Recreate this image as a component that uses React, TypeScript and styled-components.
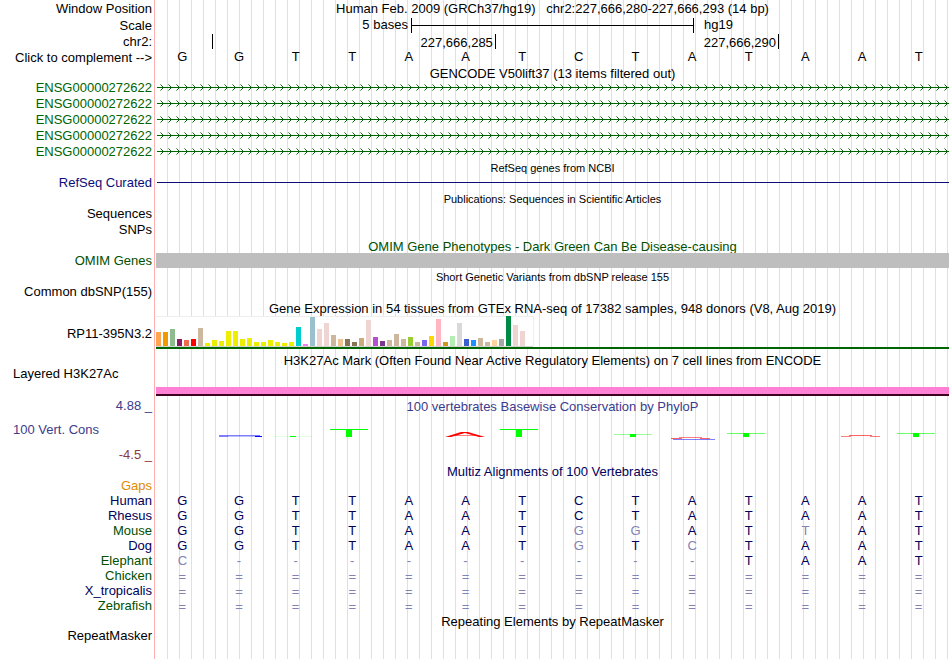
import { ReactNode, useState } from 'react';
import styled, { createGlobalStyle, ThemeProvider } from 'styled-components';

const theme = {
  palette: {
    text: '#000000',
    gencode: '#006400',
    refseq: '#0c0c78',
    align: '#00005a',
    faded: '#8282b4',
    omim: '#005000',
    positive: '#3c3c8c',
    negative: '#8c3c3c',
    gaps: '#e08a00',
    grid: '#dcdcff',
    edge: '#ffb0b0',
    grey: '#bebebe',
  },
  font: { body: 13, small: 11 },
};

type Tone = keyof typeof theme.palette;

const tone = ({ theme: t, $tone = 'text' }: { theme?: any; $tone?: Tone }) => t.palette[$tone];

const GlobalStyle = createGlobalStyle`
  body {
    margin: 0;
    background: #fff;
  }
`;

const Browser = styled.main`
  display: grid;
  grid-template-columns: 154px minmax(0, 1fr);
  min-height: 100vh;
  font-family: 'Liberation Sans', Arial, sans-serif;
  font-size: ${({ theme }) => theme.font.body}px;
  line-height: 14px;
  white-space: pre;
`;

const Labels = styled.div`
  display: flex;
  flex-direction: column;
`;

const Tracks = styled.div`
  display: flex;
  flex-direction: column;
  border-left: 1px solid ${({ theme }) => theme.palette.edge};
  padding: 0 1px;
  background: repeating-linear-gradient(
      to right,
      transparent 0 11px,
      ${({ theme }) => theme.palette.grid} 11px 12px
    )
    content-box;
`;

const Label = styled.div<{ $h: number; $tone?: Tone; $left?: boolean }>`
  display: flex;
  align-items: center;
  justify-content: ${({ $left }) => ($left ? 'flex-start' : 'flex-end')};
  height: ${({ $h }) => $h}px;
  padding: 0 2px 0 13px;
  color: ${tone};
`;

const ComplementButton = styled.button`
  border: 0;
  padding: 0;
  background: none;
  color: inherit;
  font: inherit;
  cursor: pointer;
`;

const Title = styled.div<{ $h: number; $tone?: Tone; $small?: boolean }>`
  height: ${({ $h }) => $h}px;
  line-height: ${({ $h }) => $h + 2}px;
  font-size: ${({ theme, $small }) => ($small ? theme.font.small : theme.font.body)}px;
  text-align: center;
  color: ${tone};
`;

const Lane = styled.div<{ $h: number }>`
  display: flex;
  flex-direction: column;
  height: ${({ $h }) => $h}px;
`;

const ScaleLane = styled.div`
  display: grid;
  grid-template-columns: minmax(0, 9fr) minmax(0, 10fr) minmax(0, 9fr);
  align-items: center;
  height: 18px;
`;

const ScaleText = styled.div<{ $end?: boolean }>`
  padding: 0 3px 0 10px;
  text-align: ${({ $end }) => ($end ? 'right' : 'left')};
`;

const ScaleBar = styled.div`
  display: flex;
  align-items: center;
  height: 15px;
  border: solid #000;
  border-width: 0 1px;

  &::before {
    content: '';
    flex: 1;
    height: 1px;
    background: #000;
  }
`;

const RulerLane = styled.div`
  display: grid;
  grid-template-columns: repeat(14, minmax(0, 1fr));
  height: 16px;
`;

const RulerSpan = styled.div<{ $bases: number }>`
  grid-column: span ${({ $bases }) => $bases};
  height: 15px;
  line-height: 18px;
  padding-right: 2px;
  border-right: 1px solid #000;
  text-align: right;
`;

const Bases = styled.div<{ $h: number; $line: number; $tone?: Tone }>`
  display: grid;
  grid-template-columns: repeat(14, minmax(0, 1fr));
  height: ${({ $h }) => $h}px;
  line-height: ${({ $line }) => $line}px;
  color: ${tone};
`;

const Base = styled.span<{ $faded?: boolean }>`
  padding-right: 4px;
  text-align: center;
  color: ${({ theme, $faded }) => ($faded ? theme.palette.faded : 'inherit')};
`;

const Solid = styled.div<{ $h: number; $tone: Tone }>`
  height: ${({ $h }) => $h}px;
  background: ${tone};
`;

const RefSeqLine = styled.div`
  height: 1px;
  margin: 8px 0 0 1px;
  background: ${({ theme }) => theme.palette.refseq};
`;

const Expression = styled.div`
  border-bottom: 2px solid #006400;
`;

const Histone = styled.div`
  height: 7px;
  margin-top: 20px;
  background: #ff80d5;
  border-bottom: 2px solid #400020;
`;

const Drawing = styled.svg`
  display: block;
  width: 100%;
`;

const TRANSCRIPTS = [1, 2, 3, 4, 5];

const SEQUENCE = 'GGTTAATCTATAAT';

const COMPLEMENT: Record<string, string> = { A: 'T', T: 'A', C: 'G', G: 'C' };

const SPECIES: { name: string; tone: Tone; bases: string }[] = [
  { name: 'Human', tone: 'align', bases: 'GGTTAATCTATAAT' },
  { name: 'Rhesus', tone: 'align', bases: 'GGTTAATCTATAAT' },
  { name: 'Mouse', tone: 'omim', bases: 'GGTTAATGGATTAT' },
  { name: 'Dog', tone: 'align', bases: 'GGTTAATGTCTAAT' },
  { name: 'Elephant', tone: 'omim', bases: 'C---------TAAT' },
  { name: 'Chicken', tone: 'omim', bases: '==============' },
  { name: 'X_tropicalis', tone: 'align', bases: '==============' },
  { name: 'Zebrafish', tone: 'omim', bases: '==============' },
];

// [colour, height] for each GTEx tissue
const TISSUES: [string, number][] = [
  ['#ffa54f', 14], ['#ee9a00', 14], ['#8fbc8f', 17], ['#8b1c62', 7], ['#ee6a50', 6], ['#ff0000', 7],
  ['#cdb79e', 18], ['#eeee00', 3], ['#eeee00', 6], ['#eeee00', 5], ['#eeee00', 15], ['#eeee00', 15],
  ['#eeee00', 7], ['#eeee00', 8], ['#eeee00', 4], ['#eeee00', 4], ['#eeee00', 6], ['#eeee00', 4],
  ['#eeee00', 3], ['#eeee00', 4], ['#00cdcd', 19], ['#ee82ee', 2], ['#9ac0cd', 29], ['#eed5d2', 17],
  ['#eed5d2', 23], ['#cdb79e', 11], ['#eec591', 7], ['#8b7355', 7], ['#8b7355', 4], ['#cdaa7d', 8],
  ['#eed5d2', 26], ['#b452cd', 9], ['#7a378b', 5], ['#cdb79e', 6], ['#cdb79e', 12], ['#cdb79e', 7],
  ['#9acd32', 9], ['#cdb79e', 4], ['#7a67ee', 6], ['#ffd700', 10], ['#ffb6c1', 27], ['#cd9b1d', 4],
  ['#b4eeb4', 10], ['#d9d9d9', 23], ['#3a5fcd', 7], ['#1e90ff', 6], ['#cdb79e', 8], ['#cdb79e', 4],
  ['#ffd39b', 6], ['#a6a6a6', 7], ['#008b45', 30], ['#eed5d2', 21], ['#eed5d2', 15],
];

// squashed T glyphs of the conservation logo: left, top, height, bar opacity
const LOGO_T = [
  [118, 23, 1, 0.12],
  [174, 16, 8, 1],
  [344, 16, 8, 1],
  [458, 21, 3, 0.4],
  [571, 20, 4, 0.6],
  [741, 20, 4, 0.6],
];

const Transcript = ({ id }: { id: number }) => (
  <Drawing height="16" aria-hidden="true">
    <defs>
      <pattern id={`strand-${id}`} width="8" height="16" patternUnits="userSpaceOnUse">
        <path d="M6 6h1v1h-1zM6 8h1v1h-1zM5 5h1v1h-1zM5 9h1v1h-1z" fill="#006400" />
        <path d="M4 4h1v1h-1zM4 10h1v1h-1z" fill="#006400" opacity="0.5" />
      </pattern>
    </defs>
    <rect x="1" y="7" width="100%" height="1" fill="#006400" />
    <rect width="100%" height="16" fill={`url(#strand-${id})`} />
  </Drawing>
);

const ExpressionBars = () => (
  <Drawing height="31" aria-hidden="true" shapeRendering="crispEdges">
    <rect width="377" height="31" fill="#fff" />
    <path d="M0 0h378v30h-1V1H0z" fill="#eeeeee" />
    <rect y="30" width="377" height="1" fill="#d3d3d3" />
    {TISSUES.map(([fill, h], i) => (
      <rect key={i} x={i * 7} y={30 - h} width="5" height={h} fill={fill} />
    ))}
  </Drawing>
);

const Conservation = () => (
  <Drawing height="50" viewBox="0 0 793 50" preserveAspectRatio="none" aria-hidden="true">
    <path d="M63 23.5H72M63 22.5H104" stroke="#0000ff" opacity="0.5" />
    <path d="M72 23.5H100" stroke="#0000ff" opacity="0.25" />
    <path d="M99 23.5H106" stroke="#0000ff" />
    <path d="M289 24L305 19H312L329 24H323L309 20L295 24Z" fill="#ff0000" />
    <path d="M298 22.5H320" stroke="#ff0000" opacity="0.5" />
    <path d="M515 25.5H526M544 25.5H554" stroke="#ff0000" opacity="0.6" />
    <path d="M523 24.5H546" stroke="#ff0000" opacity="0.5" />
    <path d="M517 26.5H559" stroke="#0000ff" opacity="0.5" />
    <path d="M685 23.5H695M714 23.5H724" stroke="#ff0000" opacity="0.5" />
    <path d="M693 22.5H716" stroke="#ff0000" opacity="0.6" />
    {LOGO_T.map(([x, y, h, opacity]) => (
      <g key={x} fill="#00ff00">
        <rect x={x} y={y} width="38" height="1" opacity={opacity} />
        <rect x={x + 16} y={y} width="6" height={h} />
      </g>
    ))}
  </Drawing>
);

type BaseRowProps = { bases: string; h: number; line: number; tone?: Tone; reference?: string };

const BaseRow = ({ bases, h, line, tone: t, reference }: BaseRowProps) => (
  <Bases $h={h} $line={line} $tone={t}>
    {bases.split('').map((base, i) => (
      <Base key={i} $faded={reference !== undefined && base !== reference[i]}>
        {base}
      </Base>
    ))}
  </Bases>
);

const Page = ({ children }: { children: ReactNode }) => (
  <ThemeProvider theme={theme}>
    <GlobalStyle />
    <Browser>{children}</Browser>
  </ThemeProvider>
);

export default function App() {
  const [complement, setComplement] = useState(false);
  const bases = complement ? SEQUENCE.replace(/./g, (b) => COMPLEMENT[b]) : SEQUENCE;

  return (
    <Page>
      <Labels>
        <Label $h={18}>Window Position</Label>
        <Label $h={16}>Scale</Label>
        <Label $h={16}>chr2:</Label>
        <Label $h={16}>
          <ComplementButton type="button" onClick={() => setComplement(!complement)}>
            {'Click to complement -->'}
          </ComplementButton>
        </Label>
        <Label $h={14} />
        {TRANSCRIPTS.map((id) => (
          <Label key={id} $h={16} $tone="gencode">ENSG00000272622</Label>
        ))}
        <Label $h={14} />
        <Label $h={18} $tone="refseq">RefSeq Curated</Label>
        <Label $h={14} />
        <Label $h={16}>Sequences</Label>
        <Label $h={16}>SNPs</Label>
        <Label $h={15} />
        <Label $h={16} $tone="omim">OMIM Genes</Label>
        <Label $h={15} />
        <Label $h={16}>Common dbSNP(155)</Label>
        <Label $h={16} />
        <Label $h={36}>RP11-395N3.2</Label>
        <Label $h={15} />
        <Label $h={14} $left>Layered H3K27Ac</Label>
        <Label $h={18} />
        <Label $h={14} $tone="positive">4.88 _</Label>
        <Label $h={34} $tone="positive" $left>100 Vert. Cons</Label>
        <Label $h={16} $tone="negative">-4.5 _</Label>
        <Label $h={16} />
        <Label $h={14} $tone="gaps">Gaps</Label>
        {SPECIES.map(({ name, tone: t }) => (
          <Label key={name} $h={15} $tone={t}>{name}</Label>
        ))}
        <Label $h={16} />
        <Label $h={14}>RepeatMasker</Label>
      </Labels>

      <Tracks>
        <Title $h={16}>Human Feb. 2009 (GRCh37/hg19)   chr2:227,666,280-227,666,293 (14 bp)</Title>
        <ScaleLane>
          <ScaleText $end>5 bases</ScaleText>
          <ScaleBar />
          <ScaleText>hg19</ScaleText>
        </ScaleLane>
        <RulerLane>
          <RulerSpan $bases={1} />
          <RulerSpan $bases={5}>227,666,285</RulerSpan>
          <RulerSpan $bases={5}>227,666,290</RulerSpan>
        </RulerLane>
        <BaseRow bases={bases} h={16} line={14} />
        <Title $h={14}>GENCODE V50lift37 (13 items filtered out)</Title>
        {TRANSCRIPTS.map((id) => (
          <Transcript key={id} id={id} />
        ))}
        <Title $h={14} $small>RefSeq genes from NCBI</Title>
        <Lane $h={16}>
          <RefSeqLine />
        </Lane>
        <Title $h={16} $small>Publications: Sequences in Scientific Articles</Title>
        <Lane $h={32} />
        <Title $h={15} $tone="omim">OMIM Gene Phenotypes - Dark Green Can Be Disease-causing</Title>
        <Lane $h={16}>
          <Solid $h={15} $tone="grey" />
        </Lane>
        <Title $h={15} $small>Short Genetic Variants from dbSNP release 155</Title>
        <Lane $h={16} />
        <Title $h={16}>Gene Expression in 54 tissues from GTEx RNA-seq of 17382 samples, 948 donors (V8, Aug 2019)</Title>
        <Lane $h={36}>
          <Expression>
            <ExpressionBars />
          </Expression>
        </Lane>
        <Title $h={15}>H3K27Ac Mark (Often Found Near Active Regulatory Elements) on 7 cell lines from ENCODE</Title>
        <Lane $h={32}>
          <Histone />
        </Lane>
        <Title $h={14} $tone="positive">100 vertebrates Basewise Conservation by PhyloP</Title>
        <Conservation />
        <Title $h={16} $tone="align">Multiz Alignments of 100 Vertebrates</Title>
        <Lane $h={14} />
        {SPECIES.map(({ name, bases: row }) => (
          <BaseRow
            key={name}
            bases={row}
            h={15}
            line={row.startsWith('=') ? 18 : 15}
            tone="align"
            reference={SPECIES[0].bases}
          />
        ))}
        <Title $h={16}>Repeating Elements by RepeatMasker</Title>
      </Tracks>
    </Page>
  );
}
